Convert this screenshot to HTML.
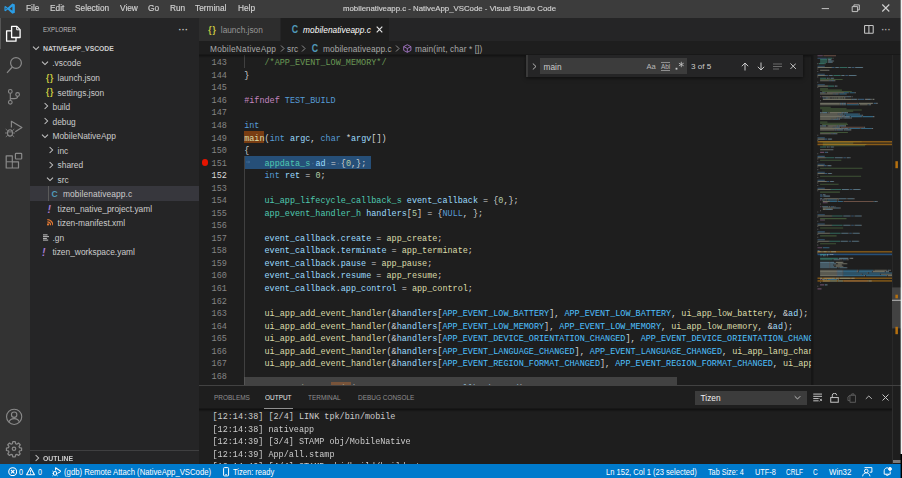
<!DOCTYPE html>
<html><head><meta charset="utf-8"><title>mobilenativeapp.c - NativeApp_VSCode - Visual Studio Code</title>
<style>
*{box-sizing:border-box;margin:0;padding:0}
html,body{width:902px;height:478px;overflow:hidden;background:#1e1e1e}
body{position:relative;font-family:"Liberation Sans",sans-serif;color:#cccccc;font-size:8.3px;-webkit-font-smoothing:antialiased}
.abs,.abs>*{position:absolute}
#root{position:absolute;left:0;top:0;width:902px;height:478px;overflow:hidden}
#root div,#root span.p,#root svg{position:absolute}
.t{white-space:pre;line-height:12px;height:12px}
/* title */
#title{left:0;top:0;width:902px;height:17.6px;background:#3c3c3c}
#title .t{font-size:8.3px;color:#d2d2d2;top:2.300px;will-change:transform;-webkit-text-stroke:0.150px #d2d2d2}
/* activity */
#act{left:0;top:17.6px;width:29.7px;height:446.5px;background:#333333}
/* sidebar */
#side{left:29.7px;top:17.6px;width:169.3px;height:446.5px;background:#252526}
#side .t{font-size:8.4px;color:#cccccc;transform:translateY(0.7px)}
/* editor */
#tabs{left:199px;top:17.6px;width:703px;height:23.2px;background:#252526}
#bc{left:199px;top:40.8px;width:703px;height:14.4px;background:#1e1e1e}
#ed{left:199px;top:55.2px;width:703px;height:330.1px;background:#1e1e1e;overflow:hidden}
.ln,.cl{transform:translateY(1.850px)}
.ol{transform:translateY(1.9px)}
.ln{font-family:"Liberation Mono",monospace;font-size:8.5px;color:#858585;white-space:pre;height:12.56px;line-height:12.56px;left:0;width:27.9px;text-align:right}
.cl{font-family:"Liberation Mono",monospace;font-size:8.480px;color:#d4d4d4;white-space:pre;height:12.56px;line-height:12.56px;left:45.2px}
.c{color:#6a9955}.k{color:#569cd6}.m{color:#c586c0}.f{color:#dcdcaa}.v{color:#9cdcfe}.ty{color:#4ec9b0}.n{color:#b5cea8}.e{color:#4fc1ff}
/* panel */
#panel{left:199px;top:385px;width:703px;height:79.2px;background:#1e1e1e;border-top:1px solid #424242;overflow:hidden}
.ol{font-family:"Liberation Mono",monospace;font-size:8.480px;color:#cccccc;white-space:pre;height:12.56px;line-height:12.56px;left:13.5px}
/* status */
#status{left:0;top:464.1px;width:902px;height:13.9px;background:#007acc}
#status .t{color:#ffffff;font-size:8.1px;top:2.200px}
</style></head><body><div id="root">

<div id="title">
<svg style="left:4.250px;top:2.500px" width="11.300" height="11.300" viewBox="0 0 100 100"><path d="M74 4 L33 42 L13 27 L4 31 L4 69 L13 73 L33 58 L74 96 L96 86 L96 14 Z M14 40 L26 50 L14 60 Z M50 50 L74 31 L74 69 Z" fill="#2a9de6" fill-rule="evenodd"/></svg>
<span class="p t" style="left:26px">File</span>
<span class="p t" style="left:50px">Edit</span>
<span class="p t" style="left:75px">Selection</span>
<span class="p t" style="left:120px">View</span>
<span class="p t" style="left:148.1px">Go</span>
<span class="p t" style="left:169.7px">Run</span>
<span class="p t" style="left:194.7px">Terminal</span>
<span class="p t" style="left:237.9px">Help</span>
<span class="p t" style="left:343.2px;font-size:7.83px;top:2.900px">mobilenativeapp.c - NativeApp_VSCode - Visual Studio Code</span>
<svg style="left:818px;top:0" width="84" height="17.600" viewBox="0 0 84 17.600" fill="none" stroke="#d0d0d0" stroke-width="0.9"><path d="M3.700 8.600h7.300"/><path d="M34.200 6.600h5.400v5h-5.400z"/><path d="M35.900 6.600v-1.700h5.400v5h-1.700"/><path d="M64.300 4.500l7 7M71.300 4.500l-7 7" stroke-width="1.100"/></svg>
</div>

<div id="act">
<div style="left:0;top:0;width:0.900px;height:31.500px;background:#555555"></div>
<svg style="left:0;top:-17.600px" width="30" height="478" viewBox="0 0 30 478" fill="none" stroke="#8a8a8a" stroke-width="1.200" stroke-linejoin="round">
<g stroke="#ffffff" stroke-width="1.300"><path d="M11.600 26.400h5.300l3.200 3.200v7.900h-8.500z"/><path d="M16.700 26.600v3.200h3.200" stroke-width="1"/><path d="M11.600 30.800h-5v10.400h9.400v-3.700"/></g>
<circle cx="16" cy="63" r="5.400"/><path d="M12.300 67L7 72.900"/>
<g stroke-width="1.100"><circle cx="10.300" cy="91.400" r="1.850"/><circle cx="10.300" cy="102.300" r="1.850"/><circle cx="17.600" cy="94.500" r="1.850"/><path d="M10.300 93.300V100.400"/><path d="M17.600 96.400c0 1.800-1.400 2.200-3.200 2.200h-4.100"/></g>
<path d="M11.400 127.400V121.200L21.900 127.600L15.300 131.700" stroke-width="1.150"/><ellipse cx="10" cy="132.900" rx="2.500" ry="3.200" stroke-width="1.100"/><path d="M7.600 130.600l-1.900-1.500M12.400 130.600l1.900-1.500M7.400 133h-2.400M12.600 133h2.400M7.700 135.300l-1.900 1.600M12.300 135.300l1.900 1.600M7.800 131.900h4.400" stroke-width="0.800"/>
<path d="M6.200 155.800h6.100v6h6.200v6.200h-12.300z"/><path d="M6.200 161.800h6.100v6.200" stroke-width="1"/><rect x="15.400" y="153.300" width="6.300" height="5.700" rx="0.800"/>
<circle cx="14.150" cy="416.850" r="7.600" stroke-width="1.100"/><circle cx="14.150" cy="414.700" r="2.700" stroke-width="1.100"/><path d="M8.900 422.200c0.900-2.700 3-3.600 5.250-3.600s4.350 0.900 5.250 3.600" stroke-width="1.100"/>
<g transform="translate(14 448.750) scale(0.640)" stroke-width="1.900"><circle cx="0" cy="0" r="2.700"/><path d="M-1.900 -11h3.800l0.600 3.100 1.900 0.800 2.600-1.800 2.700 2.700-1.800 2.600 0.800 1.900 3.100 0.600v3.800l-3.100 0.600-0.800 1.900 1.800 2.600-2.700 2.700-2.600-1.800-1.900 0.800-0.600 3.100h-3.800l-0.600-3.100-1.900-0.800-2.600 1.800-2.700-2.700 1.800-2.600-0.800-1.900-3.100-0.600v-3.800l3.100-0.600 0.800-1.900-1.800-2.600 2.700-2.700 2.600 1.800 1.900-0.800z"/></g>
</svg>
</div>

<div id="side">
<span class="p t" style="left:13.1px;top:6.1px;font-size:7.15px;color:#bbbbbb;transform:scaleX(0.85);transform-origin:0 50%">EXPLORER</span>
<span class="p t" style="left:148.8px;top:5.6px;font-size:9px;color:#c5c5c5;letter-spacing:0.3px;font-weight:bold">···</span>
<svg style="left:2.7px;top:26.7px" width="8" height="8" viewBox="0 0 8 8" fill="none" stroke="#c5c5c5" stroke-width="1.050"><path d="M1 2.600L4 5.600L7 2.600"/></svg>
<span class="p t" style="left:13.4px;top:24.6px;font-size:7.3px;font-weight:bold;color:#cccccc;transform:translateY(0.7px) scaleX(0.93);transform-origin:0 50%">NATIVEAPP_VSCODE</span>
<svg style="left:11.5px;top:41.3px" width="8" height="8" viewBox="0 0 8 8" fill="none" stroke="#c5c5c5" stroke-width="1.050"><path d="M1 2.600L4 5.600L7 2.600"/></svg>
<span class="p t" style="left:22.5px;top:38.87px">.vscode</span>
<span class="p t" style="left:16.3px;top:53.2px;font-size:8.400px;font-weight:bold;color:#cbcb41;letter-spacing:0.700px">{}</span>
<span class="p t" style="left:27.9px;top:53.41px">launch.json</span>
<span class="p t" style="left:16.3px;top:67.8px;font-size:8.400px;font-weight:bold;color:#cbcb41;letter-spacing:0.700px">{}</span>
<span class="p t" style="left:27.9px;top:67.95px">settings.json</span>
<svg style="left:12.0px;top:84.9px" width="8" height="8" viewBox="0 0 8 8" fill="none" stroke="#c5c5c5" stroke-width="1.050"><path d="M2.600 1L5.600 4L2.600 7"/></svg>
<span class="p t" style="left:22.8px;top:82.49px">build</span>
<svg style="left:12.0px;top:99.4px" width="8" height="8" viewBox="0 0 8 8" fill="none" stroke="#c5c5c5" stroke-width="1.050"><path d="M2.600 1L5.600 4L2.600 7"/></svg>
<span class="p t" style="left:22.8px;top:97.03px">debug</span>
<svg style="left:11.5px;top:114.0px" width="8" height="8" viewBox="0 0 8 8" fill="none" stroke="#c5c5c5" stroke-width="1.050"><path d="M1 2.600L4 5.600L7 2.600"/></svg>
<span class="p t" style="left:22.8px;top:111.57px">MobileNativeApp</span>
<svg style="left:17.3px;top:128.5px" width="8" height="8" viewBox="0 0 8 8" fill="none" stroke="#c5c5c5" stroke-width="1.050"><path d="M2.600 1L5.600 4L2.600 7"/></svg>
<span class="p t" style="left:27.9px;top:126.11px">inc</span>
<svg style="left:17.3px;top:143.1px" width="8" height="8" viewBox="0 0 8 8" fill="none" stroke="#c5c5c5" stroke-width="1.050"><path d="M2.600 1L5.600 4L2.600 7"/></svg>
<span class="p t" style="left:27.9px;top:140.65px">shared</span>
<svg style="left:16.8px;top:157.6px" width="8" height="8" viewBox="0 0 8 8" fill="none" stroke="#c5c5c5" stroke-width="1.050"><path d="M1 2.600L4 5.600L7 2.600"/></svg>
<span class="p t" style="left:27.9px;top:155.19px">src</span>
<div style="left:0;top:168.56px;width:169.3px;height:14.54px;background:#37373d"></div>
<div style="left:18.600px;top:168.600px;width:0.700px;height:14.540px;background:#5a5a5a"></div>
<span class="p t" style="left:21.9px;top:169.8px;font-size:8.6px;font-weight:bold;color:#519aba;transform:translateY(0.7px) scaleY(1.150)">C</span>
<span class="p t" style="left:33.2px;top:169.73px;letter-spacing:0.110px">mobilenativeapp.c</span>
<span class="p t" style="left:18.3px;top:184.2px;font-size:10.500px;font-weight:bold;font-style:italic;color:#a67ad0;margin-left:-0.500px">!</span>
<span class="p t" style="left:27.9px;top:184.27px">tizen_native_project.yaml</span>
<svg style="left:17.1px;top:201.9px" width="6.500" height="6.500" viewBox="0 0 10 10" fill="none" stroke="#e37933" stroke-width="1.8"><circle cx="1.600" cy="8.400" r="0.800" fill="#e37933"/><path d="M0.500 4.500a5 5 0 0 1 5 5M0.500 1a8.500 8.500 0 0 1 8.500 8.500"/></svg>
<span class="p t" style="left:27.9px;top:198.81px">tizen-manifest.xml</span>
<svg style="left:12.9px;top:216.0px" width="6.500" height="7" viewBox="0 0 10 10" fill="none" stroke="#c5c5c5" stroke-width="1.500"><path d="M0 1h7M0 3.700h10M0 6.400h6M0 9h8"/></svg>
<span class="p t" style="left:22.8px;top:213.35px">.gn</span>
<span class="p t" style="left:12.9px;top:227.8px;font-size:10.500px;font-weight:bold;font-style:italic;color:#a67ad0;margin-left:-0.500px">!</span>
<span class="p t" style="left:22.8px;top:227.89px">tizen_workspace.yaml</span>
<div style="left:0;top:432.7px;width:169.3px;height:0.8px;background:#3f3f40"></div>
<svg style="left:2.9px;top:436.0px" width="8" height="8" viewBox="0 0 8 8" fill="none" stroke="#c5c5c5" stroke-width="1.050"><path d="M2.600 1L5.600 4L2.600 7"/></svg>
<span class="p t" style="left:13.4px;top:434.0px;font-size:7.3px;font-weight:bold;color:#cccccc;transform:translateY(0.5px) scaleX(0.94);transform-origin:0 50%">OUTLINE</span>
</div>
<div id="tabs">
<div style="left:0;top:0;width:81.300px;height:23.200px;background:#2d2d2d"></div>
<div style="left:81.900px;top:0;width:108.400px;height:23.200px;background:#1e1e1e"></div>
<span class="p t" style="left:9.2px;top:6.0px;font-size:8.400px;font-weight:bold;color:#cbcb41;letter-spacing:1px">{}</span>
<span class="p t" style="left:21.8px;top:6.3px;font-size:8.300px;color:#969696">launch.json</span>
<span class="p t" style="left:92.8px;top:6.2px;font-size:8.800px;font-weight:bold;color:#519aba;transform:scaleY(1.150)">C</span>
<span class="p t" style="left:104.1px;top:6.3px;font-size:8.300px;color:#ffffff;font-style:italic;letter-spacing:0.060px">mobilenativeapp.c</span>
<svg style="left:177.2px;top:8.8px" width="7" height="7" viewBox="0 0 7 7" fill="none" stroke="#e4e4e4" stroke-width="1.200"><path d="M0.700 0.700l5.600 5.600M6.300 0.700l-5.600 5.600"/></svg>
<svg style="left:665.2px;top:7.5px" width="9.800" height="8.900" viewBox="0 0 10 10" preserveAspectRatio="none" fill="none" stroke="#c5c5c5" stroke-width="1.100"><rect x="0.600" y="0.600" width="8.800" height="8.800" rx="0.600"/><path d="M5 0.600v8.800"/></svg>
<span class="p t" style="left:682.4px;top:6.8px;font-size:8.500px;color:#b0b0b0;letter-spacing:0.300px;font-weight:bold">···</span>
</div>
<div id="bc">
<div style="left:0;top:13.300px;width:703px;height:1.100px;background:linear-gradient(rgba(0,0,0,0),rgba(0,0,0,0.400))"></div>
<span class="p t" style="left:11.0px;top:1.8px;font-size:8.300px;color:#a9a9a9;letter-spacing:0.230px">MobileNativeApp</span>
<svg style="left:80.5px;top:4.4px" width="5" height="7" viewBox="0 0 5 7" fill="none" stroke="#a0a0a0" stroke-width="0.850"><path d="M1 0.500L4 3.500L1 6.500"/></svg>
<span class="p t" style="left:88.0px;top:1.8px;font-size:8.300px;color:#a9a9a9">src</span>
<svg style="left:101.5px;top:4.4px" width="5" height="7" viewBox="0 0 5 7" fill="none" stroke="#a0a0a0" stroke-width="0.850"><path d="M1 0.500L4 3.500L1 6.500"/></svg>
<span class="p t" style="left:112.8px;top:1.8px;font-size:8.800px;font-weight:bold;color:#519aba;transform:scaleY(1.150)">C</span>
<span class="p t" style="left:123.9px;top:1.8px;font-size:8.300px;color:#a9a9a9;letter-spacing:0.120px">mobilenativeapp.c</span>
<svg style="left:195.5px;top:4.4px" width="5" height="7" viewBox="0 0 5 7" fill="none" stroke="#a0a0a0" stroke-width="0.850"><path d="M1 0.500L4 3.500L1 6.500"/></svg>
<svg style="left:204.3px;top:3.3px" width="8.600" height="9" viewBox="0 0 10 10" fill="none" stroke="#b180d7" stroke-width="0.950" stroke-linejoin="round"><path d="M5 0.600L9.200 2.800V7.200L5 9.400L0.800 7.200V2.800Z"/><path d="M0.800 2.800L5 5L9.200 2.800M5 5V9.400"/></svg>
<span class="p t" style="left:215.9px;top:1.8px;font-size:8.300px;color:#a9a9a9;letter-spacing:0.100px">main(int, char * [])</span>
</div>
<div id="ed">
<div style="left:45.400px;top:100.70px;width:126.300px;height:12.900px;background:#264f78"></div>
<div style="left:45.200px;top:75.58px;width:20.3px;height:12.56px;background:#793d12"></div>
<div style="left:131.7px;top:326.78px;width:20.3px;height:12.56px;background:#793d12"></div>
<div style="left:45.400px;top:0;width:0.700px;height:12.78px;background:#404040"></div>
<div style="left:45.400px;top:100.70px;width:0.700px;height:238.64px;background:#404040"></div>
<div style="left:3.2px;top:104.3px;width:6.200px;height:6.200px;border-radius:50%;background:#e51400"></div>
<svg style="left:47.3px;top:105.1px" width="4" height="4" viewBox="0 0 4 4" fill="none" stroke="#4f78a3" stroke-width="0.600"><path d="M0 2h3.600M2.300 0.700l1.300 1.300l-1.300 1.300"/></svg>
<div class="ln" style="top:0.13px;color:#858585">143</div>
<div class="cl" style="top:0.13px">    <span class="c">/*APP_EVENT_LOW_MEMORY*/</span></div>
<div class="ln" style="top:12.67px;color:#858585">144</div>
<div class="cl" style="top:12.67px">}</div>
<div class="ln" style="top:25.21px;color:#858585">145</div>
<div class="ln" style="top:37.75px;color:#858585">146</div>
<div class="cl" style="top:37.75px"><span class="m">#ifndef</span> <span class="k">TEST_BUILD</span></div>
<div class="ln" style="top:50.29px;color:#858585">147</div>
<div class="ln" style="top:62.83px;color:#858585">148</div>
<div class="cl" style="top:62.83px"><span class="k">int</span></div>
<div class="ln" style="top:75.37px;color:#858585">149</div>
<div class="cl" style="top:75.37px"><span class="f">main</span>(<span class="k">int</span> <span class="v">argc</span>, <span class="k">char</span> *<span class="v">argv</span>[])</div>
<div class="ln" style="top:87.91px;color:#858585">150</div>
<div class="cl" style="top:87.91px">{</div>
<div class="ln" style="top:100.45px;color:#858585">151</div>
<div class="cl" style="top:100.45px">    <span class="ty">appdata_s</span><span style="color:#4d739b">·</span><span class="v">ad</span><span style="color:#4d739b">·</span>=<span style="color:#4d739b">·</span>{<span class="n">0</span>,};</div>
<div class="ln" style="top:112.99px;color:#dadada">152</div>
<div class="cl" style="top:112.99px">    <span class="k">int</span> <span class="v">ret</span> = <span class="n">0</span>;</div>
<div class="ln" style="top:125.53px;color:#858585">153</div>
<div class="ln" style="top:138.07px;color:#858585">154</div>
<div class="cl" style="top:138.07px">    <span class="ty">ui_app_lifecycle_callback_s</span> <span class="v">event_callback</span> = {<span class="n">0</span>,};</div>
<div class="ln" style="top:150.61px;color:#858585">155</div>
<div class="cl" style="top:150.61px">    <span class="ty">app_event_handler_h</span> <span class="v">handlers</span>[<span class="n">5</span>] = {<span class="k">NULL</span>, };</div>
<div class="ln" style="top:163.15px;color:#858585">156</div>
<div class="ln" style="top:175.69px;color:#858585">157</div>
<div class="cl" style="top:175.69px">    <span class="v">event_callback</span>.<span class="v">create</span> = <span class="f">app_create</span>;</div>
<div class="ln" style="top:188.23px;color:#858585">158</div>
<div class="cl" style="top:188.23px">    <span class="v">event_callback</span>.<span class="v">terminate</span> = <span class="f">app_terminate</span>;</div>
<div class="ln" style="top:200.77px;color:#858585">159</div>
<div class="cl" style="top:200.77px">    <span class="v">event_callback</span>.<span class="v">pause</span> = <span class="f">app_pause</span>;</div>
<div class="ln" style="top:213.31px;color:#858585">160</div>
<div class="cl" style="top:213.31px">    <span class="v">event_callback</span>.<span class="v">resume</span> = <span class="f">app_resume</span>;</div>
<div class="ln" style="top:225.85px;color:#858585">161</div>
<div class="cl" style="top:225.85px">    <span class="v">event_callback</span>.<span class="v">app_control</span> = <span class="f">app_control</span>;</div>
<div class="ln" style="top:238.39px;color:#858585">162</div>
<div class="ln" style="top:250.93px;color:#858585">163</div>
<div class="cl" style="top:250.93px">    <span class="f">ui_app_add_event_handler</span>(&amp;<span class="v">handlers</span>[<span class="e">APP_EVENT_LOW_BATTERY</span>], <span class="e">APP_EVENT_LOW_BATTERY</span>, <span class="f">ui_app_low_battery</span>, &amp;<span class="v">ad</span>);</div>
<div class="ln" style="top:263.47px;color:#858585">164</div>
<div class="cl" style="top:263.47px">    <span class="f">ui_app_add_event_handler</span>(&amp;<span class="v">handlers</span>[<span class="e">APP_EVENT_LOW_MEMORY</span>], <span class="e">APP_EVENT_LOW_MEMORY</span>, <span class="f">ui_app_low_memory</span>, &amp;<span class="v">ad</span>);</div>
<div class="ln" style="top:276.01px;color:#858585">165</div>
<div class="cl" style="top:276.01px">    <span class="f">ui_app_add_event_handler</span>(&amp;<span class="v">handlers</span>[<span class="e">APP_EVENT_DEVICE_ORIENTATION_CHANGED</span>], <span class="e">APP_EVENT_DEVICE_ORIENTATION_CHANGED</span>, <span class="f">ui_app_orient_changed</span>, &amp;<span class="v">ad</span>);</div>
<div class="ln" style="top:288.55px;color:#858585">166</div>
<div class="cl" style="top:288.55px">    <span class="f">ui_app_add_event_handler</span>(&amp;<span class="v">handlers</span>[<span class="e">APP_EVENT_LANGUAGE_CHANGED</span>], <span class="e">APP_EVENT_LANGUAGE_CHANGED</span>, <span class="f">ui_app_lang_changed</span>, &amp;<span class="v">ad</span>);</div>
<div class="ln" style="top:301.09px;color:#858585">167</div>
<div class="cl" style="top:301.09px">    <span class="f">ui_app_add_event_handler</span>(&amp;<span class="v">handlers</span>[<span class="e">APP_EVENT_REGION_FORMAT_CHANGED</span>], <span class="e">APP_EVENT_REGION_FORMAT_CHANGED</span>, <span class="f">ui_app_region_changed</span>, &amp;<span class="v">ad</span>);</div>
<div class="ln" style="top:313.63px;color:#858585">168</div>
<div class="ln" style="top:326.17px;color:#858585">169</div>
<div class="cl" style="top:326.17px">    <span class="v">ret</span> = <span class="f">ui_app_main</span>(<span class="v">argc</span>, <span class="v">argv</span>, &amp;<span class="v">event_callback</span>, &amp;<span class="v">ad</span>);</div>
<div style="left:0;top:0;width:703px;height:2.600px;background:linear-gradient(rgba(0,0,0,0.420),rgba(0,0,0,0))"></div>
<div id="find" style="left:327px;top:0;width:276.8px;height:22.0px;background:#252526;box-shadow:0 1px 4px rgba(0,0,0,0.6)">
<div style="left:0;top:0;width:1.800px;height:22px;background:#3a3a3a"></div>
<svg style="left:5.5px;top:7.9px" width="5" height="7" viewBox="0 0 5 7" fill="none" stroke="#c5c5c5" stroke-width="0.900"><path d="M0.800 0.500L4 3.500L0.800 6.500"/></svg>
<div style="left:14px;top:3.2px;width:147px;height:16px;background:#3c3c3c"></div>
<span class="p t" style="left:17.6px;top:5.6px;font-size:8.300px;color:#cccccc">main</span>
<span class="p t" style="left:120.5px;top:5.4px;font-size:7.600px;color:#b8b8b8">Aa</span>
<span class="p t" style="left:135.0px;top:5.6px;font-size:6.400px;color:#b8b8b8;border-top:0.600px solid #8e8e8e;border-bottom:0.600px solid #8e8e8e;height:8.400px;line-height:7px;top:7.2px">Abl</span>
<svg style="left:148.8px;top:6.3px" width="10" height="10" viewBox="0 0 10 10" fill="none" stroke="#c8c8c8" stroke-width="0.800"><rect x="0.600" y="6.800" width="1.800" height="1.800" fill="#c8c8c8" stroke="none"/><path d="M6.300 0.800v5.400M3.900 2.200l4.800 2.600M8.700 2.200l-4.800 2.600"/></svg>
<span class="p t" style="left:165.0px;top:5.6px;font-size:8.100px;color:#cccccc">3 of 5</span>
<svg style="left:215.0px;top:6.9px" width="8" height="9" viewBox="0 0 8 9" fill="none" stroke="#d0d0d0" stroke-width="0.950"><path d="M4 8.500V1M0.800 4.200L4 1L7.200 4.200"/></svg>
<svg style="left:231.0px;top:6.9px" width="8" height="9" viewBox="0 0 8 9" fill="none" stroke="#d0d0d0" stroke-width="0.950"><path d="M4 0.500V8M0.800 4.800L4 8L7.200 4.800"/></svg>
<svg style="left:246.5px;top:7.9px" width="9.500" height="7" viewBox="0 0 9.500 7" fill="none" stroke="#7c7c7c" stroke-width="0.800"><path d="M0 1h9.500M0 3.500h9.500M0 6h6"/></svg>
<svg style="left:264.0px;top:8.2px" width="6.400" height="6.400" viewBox="0 0 7 7" fill="none" stroke="#d0d0d0" stroke-width="1"><path d="M0.500 0.500l6 6M6.500 0.500l-6 6"/></svg>
</div>
<div id="mm" style="left:613px;top:0;width:90px;height:330.100px;background:#1e1e1e">
<svg style="left:-2px;top:0;overflow:visible" width="92" height="330" viewBox="-2 0 92 330" fill="none" stroke-width="1.050"><rect x="-0.900" y="0" width="2.200" height="330" fill="#161616" stroke="none"/>
<rect x="5.500" y="195.95" width="74.500" height="1.62" fill="#d18616" fill-opacity="0.520" stroke="none"/>
<rect x="5.500" y="222.45" width="74.500" height="1.62" fill="#d18616" fill-opacity="0.520" stroke="none"/>
<rect x="5.500" y="225.10" width="74.500" height="1.62" fill="#d18616" fill-opacity="0.520" stroke="none"/>
<rect x="5.500" y="198.60" width="74.500" height="1.62" fill="#264f78" fill-opacity="1" stroke="none"/>
<g stroke-opacity="0.430">
<path stroke="#c586c0" d="M5.5 0.66h5.3M8.1 41.74h1.3M8.1 97.39h4.0M8.1 145.09h1.3M10.8 147.74h4.0M8.1 151.71h1.3M8.1 164.96h4.0M5.5 192.79h4.6M8.1 224.59h1.3M8.1 229.89h4.0M5.5 233.86h4.0"/>
<path stroke="#ce9178" d="M11.4 0.66h12.6M34.6 48.36h10.6M28.6 72.21h23.1M31.9 146.41h29.1M31.9 225.91h23.1"/>
<path stroke="#569cd6" d="M5.5 3.31h9.3M5.5 11.26h7.3M20.0 12.59h2.6M39.9 12.59h2.6M5.5 19.21h7.3M13.4 20.54h2.6M33.3 20.54h2.6M5.5 29.81h7.3M10.8 43.06h2.0M46.5 44.39h5.9M61.7 48.36h2.6M5.5 82.81h7.3M12.8 84.14h2.6M12.8 97.39h2.6M5.5 101.36h7.3M31.3 102.69h2.6M5.5 109.31h7.3M12.1 110.64h2.6M5.5 117.26h7.3M12.8 118.59h2.6M5.5 125.21h7.3M14.8 126.54h2.6M5.5 133.16h7.3M37.9 134.49h2.6M8.1 139.79h2.0M8.1 141.11h2.6M18.7 151.71h2.6M5.5 159.66h7.3M39.2 160.99h2.6M5.5 168.94h7.3M39.2 170.26h2.6M5.5 176.89h7.3M37.2 178.21h2.6M5.5 184.84h7.3M36.6 186.16h2.6M5.5 195.44h2.0M8.8 196.76h2.0M15.4 196.76h2.6M8.1 200.74h2.0M31.3 204.71h2.6"/>
<path stroke="#4ec9b0" d="M15.4 3.31h4.6M8.1 4.64h7.3M8.1 5.96h7.3M8.1 7.29h7.3M6.8 8.61h5.9M28.0 12.59h7.3M21.4 20.54h7.3M8.1 23.19h5.9M16.1 31.14h5.9M8.1 92.09h5.9M13.4 102.69h8.6M18.7 134.49h10.6M20.0 160.99h10.6M20.0 170.26h10.6M18.1 178.21h10.6M17.4 186.16h10.6M8.1 199.41h5.9M8.1 203.39h17.8M8.1 204.71h12.6"/>
<path stroke="#d4d4d4" d="M20.7 3.31h0.7M16.1 4.64h0.7M18.7 4.64h0.7M16.1 5.96h0.7M21.4 5.96h0.7M16.1 7.29h0.7M20.0 7.29h0.7M5.5 8.61h0.7M12.8 8.61h0.7M19.4 12.59h0.7M23.3 12.59h0.7M26.7 12.59h0.7M35.9 12.59h0.7M38.6 12.59h0.7M43.2 12.59h0.7M50.4 12.59h0.7M5.5 13.91h0.7M15.4 15.24h0.7M16.1 15.24h0.7M16.7 15.24h0.7M5.5 16.56h0.7M12.8 20.54h0.7M16.7 20.54h0.7M20.0 20.54h0.7M29.3 20.54h0.7M31.9 20.54h0.7M36.6 20.54h0.7M43.8 20.54h0.7M5.5 21.86h0.7M14.8 23.19h0.7M17.4 23.19h0.7M21.4 23.19h0.7M16.7 25.84h0.7M18.7 25.84h0.7M19.4 25.84h0.7M22.0 25.84h0.7M22.7 25.84h0.7M5.5 27.16h0.7M15.4 31.14h0.7M22.7 31.14h0.7M24.7 31.14h0.7M5.5 32.46h0.7M9.5 37.76h0.7M10.1 37.76h0.7M13.4 37.76h0.7M31.3 37.76h0.7M36.6 37.76h0.7M42.5 37.76h0.7M43.2 37.76h0.7M20.7 39.09h0.7M22.7 39.09h0.7M23.3 39.09h0.7M26.0 39.09h0.7M33.3 39.09h0.7M33.9 39.09h0.7M10.1 41.74h0.7M32.6 41.74h0.7M34.6 41.74h0.7M35.2 41.74h0.7M37.9 41.74h0.7M38.6 41.74h0.7M39.9 41.74h0.7M16.1 43.06h0.7M17.4 43.06h0.7M18.7 43.06h0.7M20.0 43.06h0.7M22.0 43.06h0.7M24.7 43.06h0.7M28.0 43.06h0.7M31.9 43.06h0.7M32.6 43.06h0.7M39.2 44.39h0.7M41.2 44.39h0.7M41.9 44.39h0.7M44.5 44.39h0.7M45.8 44.39h0.7M53.1 44.39h0.7M53.8 44.39h0.7M54.4 44.39h0.7M55.1 44.39h0.7M58.4 44.39h0.7M59.0 44.39h0.7M61.0 44.39h0.7M61.7 44.39h0.7M8.1 45.71h0.7M28.0 48.36h0.7M30.0 48.36h0.7M30.6 48.36h0.7M33.3 48.36h0.7M45.2 48.36h0.7M60.4 48.36h0.7M64.3 48.36h0.7M65.0 48.36h0.7M28.0 49.69h0.7M30.0 49.69h0.7M30.6 49.69h0.7M33.3 49.69h0.7M46.5 49.69h0.7M55.1 49.69h0.7M57.7 49.69h0.7M58.4 49.69h0.7M9.5 57.64h0.7M10.1 57.64h0.7M16.1 57.64h0.7M29.3 57.64h0.7M31.3 57.64h0.7M31.9 57.64h0.7M34.6 57.64h0.7M35.2 57.64h0.7M25.3 58.96h0.7M27.3 58.96h0.7M28.0 58.96h0.7M30.6 58.96h0.7M46.5 58.96h0.7M47.1 58.96h0.7M27.3 60.29h0.7M29.3 60.29h0.7M30.0 60.29h0.7M32.6 60.29h0.7M49.8 60.29h0.7M50.4 60.29h0.7M29.3 61.61h0.7M31.3 61.61h0.7M31.9 61.61h0.7M37.2 61.61h0.7M49.1 61.61h0.7M61.0 61.61h0.7M61.7 61.61h0.7M24.7 62.94h0.7M26.7 62.94h0.7M27.3 62.94h0.7M30.0 62.94h0.7M32.6 62.94h0.7M33.3 62.94h0.7M38.6 62.94h0.7M39.2 62.94h0.7M18.7 64.26h0.7M20.7 64.26h0.7M21.4 64.26h0.7M26.7 64.26h0.7M27.3 64.26h0.7M9.5 70.89h0.7M10.1 70.89h0.7M14.8 70.89h0.7M24.7 70.89h0.7M26.7 70.89h0.7M27.3 70.89h0.7M32.6 70.89h0.7M33.3 70.89h0.7M20.7 72.21h0.7M22.7 72.21h0.7M23.3 72.21h0.7M27.3 72.21h0.7M51.8 72.21h0.7M52.4 72.21h0.7M29.3 73.54h0.7M31.3 73.54h0.7M31.9 73.54h0.7M35.9 73.54h0.7M47.8 73.54h0.7M59.7 73.54h0.7M60.4 73.54h0.7M22.7 74.86h0.7M24.7 74.86h0.7M25.3 74.86h0.7M30.6 74.86h0.7M33.3 74.86h0.7M33.9 74.86h0.7M37.9 74.86h0.7M38.6 74.86h0.7M18.7 78.84h0.7M20.7 78.84h0.7M21.4 78.84h0.7M24.0 78.84h0.7M24.7 78.84h0.7M5.5 80.16h0.7M12.1 84.14h0.7M16.1 84.14h0.7M19.4 84.14h0.7M5.5 85.46h0.7M14.8 92.09h0.7M17.4 92.09h0.7M21.4 92.09h0.7M18.1 94.74h0.7M20.0 94.74h0.7M20.7 94.74h0.7M15.4 97.39h0.7M5.5 98.71h0.7M12.8 102.69h0.7M30.0 102.69h0.7M34.6 102.69h0.7M37.9 102.69h0.7M5.5 104.01h0.7M5.5 106.66h0.7M11.4 110.64h0.7M15.4 110.64h0.7M18.7 110.64h0.7M5.5 111.96h0.7M5.5 114.61h0.7M12.1 118.59h0.7M16.1 118.59h0.7M19.4 118.59h0.7M5.5 119.91h0.7M5.5 122.56h0.7M14.1 126.54h0.7M18.1 126.54h0.7M21.4 126.54h0.7M5.5 127.86h0.7M5.5 130.51h0.7M18.1 134.49h0.7M36.6 134.49h0.7M41.2 134.49h0.7M47.8 134.49h0.7M5.5 135.81h0.7M12.8 139.79h0.7M11.4 141.11h0.7M17.4 141.11h0.7M10.8 143.76h0.7M26.7 143.76h0.7M33.9 143.76h0.7M35.2 143.76h0.7M41.2 143.76h0.7M41.9 143.76h0.7M10.1 145.09h0.7M13.4 145.09h0.7M14.1 145.09h0.7M24.7 145.09h0.7M26.0 145.09h0.7M17.4 146.41h0.7M24.7 146.41h0.7M30.6 146.41h0.7M61.0 146.41h0.7M64.3 146.41h0.7M65.0 146.41h0.7M14.8 147.74h0.7M8.1 149.06h0.7M10.1 151.71h0.7M16.7 151.71h0.7M17.4 151.71h0.7M21.4 151.71h0.7M22.7 151.71h0.7M21.4 153.04h0.7M27.3 153.04h0.7M28.0 153.04h0.7M13.4 154.36h0.7M19.4 154.36h0.7M20.0 154.36h0.7M8.1 155.69h0.7M5.5 157.01h0.7M19.4 160.99h0.7M37.9 160.99h0.7M42.5 160.99h0.7M49.1 160.99h0.7M5.5 162.31h0.7M12.1 164.96h0.7M5.5 166.29h0.7M19.4 170.26h0.7M37.9 170.26h0.7M42.5 170.26h0.7M49.1 170.26h0.7M5.5 171.59h0.7M5.5 174.24h0.7M17.4 178.21h0.7M35.9 178.21h0.7M40.5 178.21h0.7M47.1 178.21h0.7M5.5 179.54h0.7M5.5 182.19h0.7M16.7 186.16h0.7M35.2 186.16h0.7M39.9 186.16h0.7M46.5 186.16h0.7M5.5 187.49h0.7M5.5 190.14h0.7M8.1 196.76h0.7M14.1 196.76h0.7M18.7 196.76h0.7M22.0 196.76h0.7M22.7 196.76h0.7M23.3 196.76h0.7M5.5 198.09h0.7M16.7 199.41h0.7M18.1 199.41h0.7M19.4 199.41h0.7M20.0 199.41h0.7M20.7 199.41h0.7M13.4 200.74h0.7M15.4 200.74h0.7M36.6 203.39h0.7M37.9 203.39h0.7M39.2 203.39h0.7M39.9 203.39h0.7M40.5 203.39h0.7M26.7 204.71h0.7M28.0 204.71h0.7M29.3 204.71h0.7M30.6 204.71h0.7M33.9 204.71h0.7M35.2 204.71h0.7M35.9 204.71h0.7M17.4 207.36h0.7M22.7 207.36h0.7M30.6 207.36h0.7M17.4 208.69h0.7M24.7 208.69h0.7M34.6 208.69h0.7M17.4 210.01h0.7M22.0 210.01h0.7M29.3 210.01h0.7M17.4 211.34h0.7M22.7 211.34h0.7M30.6 211.34h0.7M17.4 212.66h0.7M26.0 212.66h0.7M34.6 212.66h0.7M24.0 215.31h0.7M24.7 215.31h0.7M30.6 215.31h0.7M45.2 215.31h0.7M45.8 215.31h0.7M61.0 215.31h0.7M74.2 215.31h0.7M75.6 215.31h0.7M77.5 215.31h0.7M78.2 215.31h0.7M24.0 216.64h0.7M24.7 216.64h0.7M30.6 216.64h0.7M44.5 216.64h0.7M45.2 216.64h0.7M59.7 216.64h0.7M72.3 216.64h0.7M73.6 216.64h0.7M75.6 216.64h0.7M76.2 216.64h0.7M24.0 217.96h0.7M24.7 217.96h0.7M30.6 217.96h0.7M55.1 217.96h0.7M55.7 217.96h0.7M24.0 219.29h0.7M24.7 219.29h0.7M30.6 219.29h0.7M48.5 219.29h0.7M49.1 219.29h0.7M67.6 219.29h0.7M24.0 220.61h0.7M24.7 220.61h0.7M30.6 220.61h0.7M51.8 220.61h0.7M52.4 220.61h0.7M74.2 220.61h0.7M10.8 223.26h0.7M19.4 223.26h0.7M22.7 223.26h0.7M26.7 223.26h0.7M28.0 223.26h0.7M37.9 223.26h0.7M39.2 223.26h0.7M41.2 223.26h0.7M41.9 223.26h0.7M10.1 224.59h0.7M13.4 224.59h0.7M14.1 224.59h0.7M24.7 224.59h0.7M26.0 224.59h0.7M17.4 225.91h0.7M24.7 225.91h0.7M30.6 225.91h0.7M55.1 225.91h0.7M58.4 225.91h0.7M59.0 225.91h0.7M8.1 227.24h0.7M14.8 229.89h0.7M5.5 231.21h0.7"/>
<path stroke="#9cdcfe" d="M16.7 4.64h2.0M16.7 5.96h4.6M16.7 7.29h3.3M24.0 12.59h2.6M36.6 12.59h2.0M43.8 12.59h6.6M17.4 20.54h2.6M30.0 20.54h2.0M37.2 20.54h6.6M15.4 23.19h1.3M18.7 23.19h2.6M17.4 25.84h1.3M20.0 25.84h2.0M23.3 31.14h1.3M8.1 37.76h1.3M10.8 37.76h2.0M21.4 39.09h1.3M24.0 39.09h2.0M33.3 41.74h1.3M35.9 41.74h2.0M13.4 43.06h2.6M39.9 44.39h1.3M42.5 44.39h2.0M55.7 44.39h2.6M28.6 48.36h1.3M31.3 48.36h2.0M28.6 49.69h1.3M31.3 49.69h2.0M56.4 49.69h1.3M8.1 57.64h1.3M10.8 57.64h4.6M30.0 57.64h1.3M32.6 57.64h2.0M26.0 58.96h1.3M28.6 58.96h2.0M28.0 60.29h1.3M30.6 60.29h2.0M30.0 61.61h1.3M32.6 61.61h4.6M25.3 62.94h1.3M28.0 62.94h2.0M31.3 62.94h1.3M33.9 62.94h4.6M19.4 64.26h1.3M22.0 64.26h4.6M8.1 70.89h1.3M10.8 70.89h3.3M25.3 70.89h1.3M28.0 70.89h4.6M21.4 72.21h1.3M24.0 72.21h3.3M30.0 73.54h1.3M32.6 73.54h3.3M23.3 74.86h1.3M26.0 74.86h4.6M31.9 74.86h1.3M34.6 74.86h3.3M19.4 78.84h1.3M22.0 78.84h2.0M16.7 84.14h2.6M15.4 92.09h1.3M18.7 92.09h2.6M18.7 94.74h1.3M22.7 102.69h7.3M35.2 102.69h2.6M16.1 110.64h2.6M16.7 118.59h2.6M18.7 126.54h2.6M30.0 134.49h6.6M41.9 134.49h5.9M10.8 139.79h2.0M12.1 141.11h5.3M8.1 143.76h2.0M27.3 143.76h6.6M35.9 143.76h5.3M10.8 145.09h2.0M62.3 146.41h2.0M10.8 151.71h5.3M22.0 153.04h5.3M14.1 154.36h5.3M31.3 160.99h6.6M43.2 160.99h5.9M31.3 170.26h6.6M43.2 170.26h5.9M29.3 178.21h6.6M41.2 178.21h5.9M28.6 186.16h6.6M40.5 186.16h5.9M11.4 196.76h2.6M19.4 196.76h2.6M14.8 199.41h1.3M10.8 200.74h2.0M26.7 203.39h9.3M21.4 204.71h5.3M8.1 207.36h9.3M18.1 207.36h4.0M8.1 208.69h9.3M18.1 208.69h5.9M8.1 210.01h9.3M18.1 210.01h3.3M8.1 211.34h9.3M18.1 211.34h4.0M8.1 212.66h9.3M18.1 212.66h7.3M27.3 212.66h7.3M25.3 215.31h5.3M76.2 215.31h1.3M25.3 216.64h5.3M74.2 216.64h1.3M25.3 217.96h5.3M25.3 219.29h5.3M25.3 220.61h5.3M8.1 223.26h2.0M20.0 223.26h2.6M24.0 223.26h2.6M28.6 223.26h9.3M39.9 223.26h1.3M10.8 224.59h2.0M56.4 225.91h2.0M12.8 229.89h2.0"/>
<path stroke="#d9d9bc" d="M5.5 12.59h13.9M8.1 15.24h7.3M5.5 20.54h7.3M8.1 25.84h8.6M5.5 31.14h9.9M14.8 37.76h16.5M8.1 39.09h12.6M10.8 41.74h21.8M10.8 44.39h28.4M8.1 48.36h19.8M46.5 48.36h13.9M8.1 49.69h19.8M47.8 49.69h7.3M17.4 57.64h11.9M8.1 58.96h17.2M8.1 60.29h19.2M8.1 61.61h21.2M8.1 62.94h16.5M8.1 64.26h10.6M16.1 70.89h8.6M8.1 72.21h12.6M8.1 73.54h21.2M8.1 74.86h14.5M8.1 78.84h10.6M5.5 84.14h6.6M8.1 94.74h9.9M5.5 102.69h7.3M5.5 110.64h5.9M5.5 118.59h6.6M5.5 126.54h8.6M5.5 134.49h12.6M12.1 143.76h14.5M10.8 146.41h6.6M10.8 153.04h10.6M10.8 154.36h2.6M5.5 160.99h13.9M5.5 170.26h13.9M5.5 178.21h11.9M5.5 186.16h11.2M5.5 196.76h2.6M24.0 207.36h6.6M26.0 208.69h8.6M23.3 210.01h5.9M24.0 211.34h6.6M8.1 215.31h15.9M62.3 215.31h11.9M8.1 216.64h15.9M61.0 216.64h11.2M8.1 217.96h15.9M8.1 219.29h15.9M69.0 219.29h11.2M8.1 220.61h15.9M75.6 220.61h4.6M12.1 223.26h7.3M10.8 225.91h6.6"/>
<path stroke="#6a9955" d="M8.1 24.51h22.5M8.1 33.79h7.9M8.1 35.11h21.8M10.1 36.44h29.7M8.1 52.34h10.6M8.1 53.66h26.4M10.1 54.99h39.7M10.1 56.31h31.1M8.1 66.91h7.3M8.1 68.24h27.1M10.1 69.56h25.8M8.1 77.51h27.8M8.1 86.79h41.6M10.8 88.11h30.4M10.8 89.44h43.6M10.8 90.76h42.3M8.1 105.34h21.2M8.1 113.29h42.3M8.1 121.24h41.0M8.1 129.19h18.5M8.1 137.14h19.8M8.1 163.64h26.4M8.1 172.91h23.1M8.1 180.86h16.5M8.1 188.81h15.9"/>
<path stroke="#4fc1ff" d="M31.9 37.76h4.6M37.9 37.76h4.6M27.3 39.09h5.9M34.6 49.69h11.9M31.9 58.96h14.5M33.9 60.29h15.9M38.6 61.61h10.6M50.4 61.61h10.6M37.2 73.54h10.6M49.1 73.54h10.6M15.4 145.09h9.3M18.1 146.41h6.6M26.0 146.41h4.6M10.8 192.79h6.6M31.3 215.31h13.9M47.1 215.31h13.9M31.3 216.64h13.2M46.5 216.64h13.2M31.3 217.96h23.8M57.1 217.96h23.1M31.3 219.29h17.2M50.4 219.29h17.2M31.3 220.61h20.5M53.8 220.61h20.5M15.4 224.59h9.3M18.1 225.91h6.6M26.0 225.91h4.6"/>
<path stroke="#b5cea8" d="M16.7 43.06h0.7M21.4 43.06h0.7M23.3 43.06h1.3M26.0 43.06h2.0M29.3 43.06h2.0M60.4 44.39h0.7M18.7 199.41h0.7M14.8 200.74h0.7M38.6 203.39h0.7M27.3 204.71h0.7"/>
</g>
<rect x="5.500" y="85.97" width="74.500" height="1.62" fill="#d18616" fill-opacity="0.600" stroke="none"/>
<rect x="5.500" y="88.62" width="74.500" height="1.62" fill="#d18616" fill-opacity="0.600" stroke="none"/>

<rect x="80" y="0" width="9" height="330.100" fill="#1f1f1f" stroke="none"/>
<rect x="80" y="0" width="0.600" height="330.100" fill="#303030" stroke="none"/>

<rect x="80" y="232.4" width="9" height="41" fill="#424242" stroke="none"/>
<rect x="83.400" y="106.2" width="2.500" height="7.0" fill="#b5700f" stroke="none"/>
<rect x="83.400" y="239.7" width="2.500" height="3.6" fill="#b5700f" stroke="none"/>
<rect x="83.400" y="271.8" width="2.500" height="7.4" fill="#b5700f" stroke="none"/>
<rect x="80" y="244.7" width="9" height="1.300" fill="#a0a0a0" stroke="none"/>
</svg>
</div>
<div style="left:44.800px;top:321.6px;width:432.8px;height:8.600px;background:rgba(121,121,121,0.4)"></div>
</div>
<div id="panel">
<div style="left:0;top:22px;width:693px;height:3.500px;background:linear-gradient(rgba(0,0,0,0.100),rgba(0,0,0,0.450) 30%,rgba(0,0,0,0))"></div>
<span class="p t" style="left:14.6px;top:6.400px;font-size:7.3px;color:#8f8f8f;transform:scaleX(0.885);transform-origin:0 50%">PROBLEMS</span>
<span class="p t" style="left:65.9px;top:6.400px;font-size:7.3px;color:#e7e7e7;transform:scaleX(0.885);transform-origin:0 50%">OUTPUT</span>
<span class="p t" style="left:108.8px;top:6.400px;font-size:7.3px;color:#8f8f8f;transform:scaleX(0.885);transform-origin:0 50%">TERMINAL</span>
<span class="p t" style="left:158.7px;top:6.400px;font-size:7.3px;color:#8f8f8f;transform:scaleX(0.885);transform-origin:0 50%">DEBUG CONSOLE</span>
<div style="left:64.9px;top:22.4px;width:29.500px;height:1px;background:#909090"></div>
<div class="ol" style="top:23.12px">[12:14:38] [2/4] LINK tpk/bin/mobile</div>
<div class="ol" style="top:35.62px">[12:14:38] nativeapp</div>
<div class="ol" style="top:48.12px">[12:14:39] [3/4] STAMP obj/MobileNative</div>
<div class="ol" style="top:60.62px">[12:14:39] App/all.stamp</div>
<div class="ol" style="top:73.12px">[12:14:40] [4/4] STAMP obj/build/build.stamp</div>
<div style="left:495.7px;top:4.600px;width:112.400px;height:14.500px;background:#3c3c3c"></div>
<span class="p t" style="left:501.6px;top:5.6px;font-size:8.3px;color:#f0f0f0;">Tizen</span>
<svg style="left:594.5px;top:8.3px" width="7" height="7" viewBox="0 0 8 8" fill="none" stroke="#d0d0d0" stroke-width="1"><path d="M0.800 2.500L4 5.700L7.200 2.500"/></svg>
<svg style="left:613.5px;top:7.1px" width="9.500" height="9" viewBox="0 0 10 10" fill="none" stroke="#c5c5c5" stroke-width="1.100"><path d="M0 1.200h10M0 3.700h10M0 6.200h6M0 8.700h6"/><path d="M7 6.200l3 3M10 6.200l-3 3" stroke-width="0.900"/></svg>
<svg style="left:630.5px;top:6.6px" width="9" height="10" viewBox="0 0 10 11" fill="none" stroke="#c5c5c5" stroke-width="1.100"><rect x="0.800" y="5" width="8.400" height="5.200"/><path d="M2.500 5V3a2.500 2.500 0 0 1 5-0.500"/></svg>
<svg style="left:647.8px;top:6.6px" width="9.500" height="10" viewBox="0 0 10 11" fill="none" stroke="#5a5a5a" stroke-width="1.100"><path d="M3 2.500h6.200v7.700H3z"/><path d="M3 2.500l-2.200 1.800v4h2.200M5 2.500v-1.500h2.500v1.500"/></svg>
<svg style="left:665.7px;top:8.1px" width="7.600" height="7" viewBox="0 0 8 8" fill="none" stroke="#c5c5c5" stroke-width="1.050"><path d="M0.600 5.600L4 2.200L7.400 5.600"/></svg>
<svg style="left:683.0px;top:8.1px" width="7" height="7" viewBox="0 0 7 7" fill="none" stroke="#c5c5c5" stroke-width="1"><path d="M0.500 0.500l6 6M6.500 0.500l-6 6"/></svg>
<div style="left:693.0px;top:0;width:0.800px;height:80px;background:#2e2e2e"></div>
<div style="left:693.5px;top:74.300px;width:8.500px;height:2.600px;background:#7a7a7a"></div>
</div>
<div id="status">
<svg style="left:8px;top:3px" width="9.400" height="9.400" viewBox="0 0 10 10" fill="none" stroke="#fff" stroke-width="1.150"><circle cx="5" cy="5" r="4.200"/><path d="M3.200 3.200l3.600 3.600M6.800 3.200l-3.600 3.600"/></svg>
<span class="p t" style="left:19.4px;font-size:8.400px;transform:scaleX(0.856);transform-origin:0 50%">0</span>
<svg style="left:26.300px;top:3.300px" width="9" height="8.400" viewBox="0 0 10 10" preserveAspectRatio="none" fill="none" stroke="#fff" stroke-width="1.150" stroke-linejoin="round"><path d="M5 0.900L9.400 9.200H0.600Z"/><path d="M5 3.700v2.900M5 7.300v1" stroke-width="1"/></svg>
<span class="p t" style="left:37.5px;font-size:8.400px;transform:scaleX(0.856);transform-origin:0 50%">0</span>
<svg style="left:51.600px;top:3.400px" width="9.800" height="9.400" viewBox="0 0 10 10" fill="none" stroke="#fff" stroke-width="1.100" stroke-linejoin="round"><path d="M3.600 3.600V0.800L9.300 4.500L6.300 6.500"/><ellipse cx="3" cy="6.800" rx="1.700" ry="2.100"/><path d="M1.400 5.200l-1.200-1M1.300 8.600l-1.200 1M4.700 8.600l1.200 1M0 6.800h1.300M4.700 6.800h1.400" stroke-width="0.750"/></svg>
<span class="p t" style="left:63.6px;font-size:8.400px;transform:scaleX(0.924);transform-origin:0 50%">(gdb) Remote Attach (NativeApp_VSCode)</span>
<svg style="left:223.400px;top:3.4px" width="6.200" height="9.500" viewBox="0 0 6.200 9.500" fill="none" stroke="#fff" stroke-width="1"><rect x="0.600" y="0.600" width="5" height="8.300" rx="0.800"/><path d="M2.300 7.500h1.600" stroke-width="0.800"/></svg>
<span class="p t" style="left:233.3px;font-size:8.400px;transform:scaleX(0.899);transform-origin:0 50%">Tizen: ready</span>
<span class="p t" style="left:605.8px;font-size:8.400px;transform:scaleX(0.902);transform-origin:0 50%">Ln 152, Col 1 (23 selected)</span>
<span class="p t" style="left:707.7px;font-size:8.400px;transform:scaleX(0.863);transform-origin:0 50%">Tab Size: 4</span>
<span class="p t" style="left:754.5px;font-size:8.400px;transform:scaleX(0.876);transform-origin:0 50%">UTF-8</span>
<span class="p t" style="left:785.9px;font-size:8.400px;transform:scaleX(0.777);transform-origin:0 50%">CRLF</span>
<span class="p t" style="left:813.3px;font-size:8.400px;transform:scaleX(0.771);transform-origin:0 50%">C</span>
<span class="p t" style="left:828.8px;font-size:8.400px;transform:scaleX(0.940);transform-origin:0 50%">Win32</span>
<svg style="left:862.400px;top:3.4px" width="10.500" height="9.500" viewBox="0 0 10.500 9.500" fill="none" stroke="#fff" stroke-width="0.950" stroke-linejoin="round"><path d="M2.500 0.600h7.400v4.600h-2.200"/><circle cx="4.300" cy="4" r="1.800"/><path d="M0.600 9.300c0.400-2.600 2-3.500 3.700-3.500s3.300 0.900 3.700 3.500"/></svg>
<svg style="left:883px;top:3.3px" width="9" height="9.800" viewBox="0 0 9 9.800" fill="none" stroke="#fff" stroke-width="0.950" stroke-linejoin="round"><path d="M1.200 7.200V3.800a3 3 0 0 1 4-2.800M7.200 4.500v2.700h-6M3 7.200a1.300 1.300 0 0 0 2.600 0"/><circle cx="7" cy="1.900" r="1.500" fill="#fff"/></svg>
</div>

<div style="left:901px;top:0;width:1px;height:454px;background:#f2f2f2"></div>
<div style="left:900px;top:0;width:1px;height:454px;background:rgba(255,255,255,0.300)"></div>
<div style="left:901px;top:454px;width:1px;height:24px;background:#000"></div>
<div style="left:900px;top:454px;width:1px;height:24px;background:rgba(0,0,0,0.400)"></div>
</div></body></html>
